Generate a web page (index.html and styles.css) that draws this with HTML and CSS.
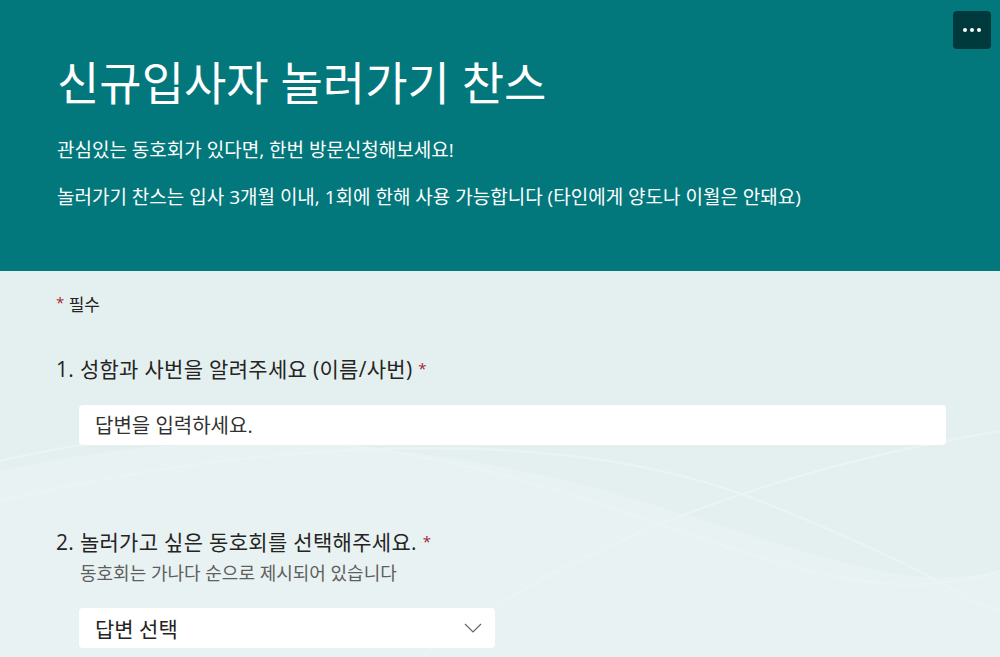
FILE: index.html
```html
<!DOCTYPE html>
<html lang="ko">
<head>
    <meta charset="utf-8">
    <title>신규입사자 놀러가기 찬스</title>
    <link rel="stylesheet" href="styles.css">
</head>
<body>

    <!-- form header -->
    <header class="form-header">
        <button class="more-button" aria-label="더 많은 옵션">
            <span class="dot"></span><span class="dot"></span><span class="dot"></span>
        </button>
        <h1 class="form-title">신규입사자 놀러가기 찬스</h1>
        <p class="form-desc">관심있는 동호회가 있다면, 한번 방문신청해보세요!</p>
        <p class="form-desc">놀러가기 찬스는 입사 3개월 이내, 1회에 한해 사용 가능합니다 (타인에게 양도나 이월은 안돼요)</p>
    </header>

    <main class="form-body">
        <!-- soft wave pattern behind the questions -->
        <svg class="backdrop" viewBox="0 0 1000 386" preserveAspectRatio="none" aria-hidden="true">
            <path class="band" d="M0 200 C 220 150, 440 170, 640 230 S 900 320, 1000 300 L 1000 386 L 0 386 Z" />
            <path d="M0 190 C 200 140, 420 170, 620 240 S 900 330, 1000 300" />
            <path d="M0 230 C 250 170, 560 150, 760 230 S 960 330, 1000 340" />
            <path d="M420 386 C 560 280, 760 200, 1000 160" />
        </svg>

        <div class="required-note"><span class="star">*</span> 필수</div>

        <section class="question">
            <div class="question-title">1. 성함과 사번을 알려주세요 (이름/사번) <span class="star">*</span></div>
            <input class="text-input" type="text" placeholder="답변을 입력하세요.">
        </section>

        <section class="question second">
            <div class="question-title">2. 놀러가고 싶은 동호회를 선택해주세요. <span class="star">*</span></div>
            <div class="question-sub">동호회는 가나다 순으로 제시되어 있습니다</div>
            <div class="select-box">
                <span>답변 선택</span>
                <svg class="chevron" width="18" height="10" viewBox="0 0 18 10">
                    <path d="M1 1 L9 9 L17 1" fill="none" stroke="#666" stroke-width="1.2" />
                </svg>
            </div>
        </section>
    </main>

</body>
</html>
```

FILE: styles.css
```css
body {
    margin: 0;
    padding: 0;
    font-family: "Open Sans", "Noto Sans CJK KR", sans-serif;
    background-color: #e5f0f0;
    color: #252423;
}

/* header */
.form-header {
    position: relative;
    background-color: #03787c;
    color: #fff;
    height: 271px;
    box-sizing: border-box;
    padding: 52px 57px 0;
}

.more-button {
    position: absolute;
    top: 11px;
    right: 9px;
    width: 38px;
    height: 38px;
    border: none;
    border-radius: 4px;
    background-color: #013a3c;
    display: flex;
    align-items: center;
    justify-content: center;
    gap: 3px;
    padding: 0;
}

.dot {
    width: 4px;
    height: 4px;
    border-radius: 50%;
    background-color: #fff;
}

.form-title {
    margin: 0 0 25px;
    font-size: 46px;
    font-weight: 400;
    line-height: 60px;
}

.form-desc {
    margin: 0 0 21px;
    font-size: 19px;
    line-height: 26px;
}

/* body */
.form-body {
    position: relative;
    overflow: hidden;
    height: 364px;
    padding: 22px 54px 0 56px;
    background-color: #e4f0f0;
}

.backdrop {
    position: absolute;
    left: 0;
    top: 0;
    width: 100%;
    height: 100%;
}

.backdrop path {
    fill: none;
    stroke: #ebf4f4;
    stroke-width: 2;
}

.backdrop .band {
    fill: #e8f2f2;
    stroke: none;
}

.required-note,
.question {
    position: relative;
}

.required-note {
    font-size: 17px;
    line-height: 24px;
}

.star {
    color: #a4262c;
    font-size: 15px;
    line-height: 0;
    vertical-align: 3px;
}

.question {
    margin-top: 37px;
}

.question.second {
    margin-top: 82px;
}

.question-title {
    font-size: 21px;
    line-height: 30px;
    letter-spacing: 0.3px;
}

.question-sub {
    margin: 4px 0 0 24px;
    font-size: 18px;
    line-height: 24px;
    color: #605e5c;
}

.text-input {
    display: block;
    box-sizing: border-box;
    width: 867px;
    height: 40px;
    margin: 21px 0 0 23px;
    padding: 0 16px;
    border: none;
    border-radius: 4px;
    background-color: #fff;
    font-family: inherit;
    font-size: 20px;
    outline: none;
}

.text-input::placeholder {
    color: #323130;
}

.select-box {
    box-sizing: border-box;
    width: 416px;
    height: 40px;
    margin: 23px 0 0 23px;
    padding: 0 13px 0 16px;
    border-radius: 4px;
    background-color: #fff;
    display: flex;
    align-items: center;
    justify-content: space-between;
    font-size: 21px;
    color: #252423;
}
```
